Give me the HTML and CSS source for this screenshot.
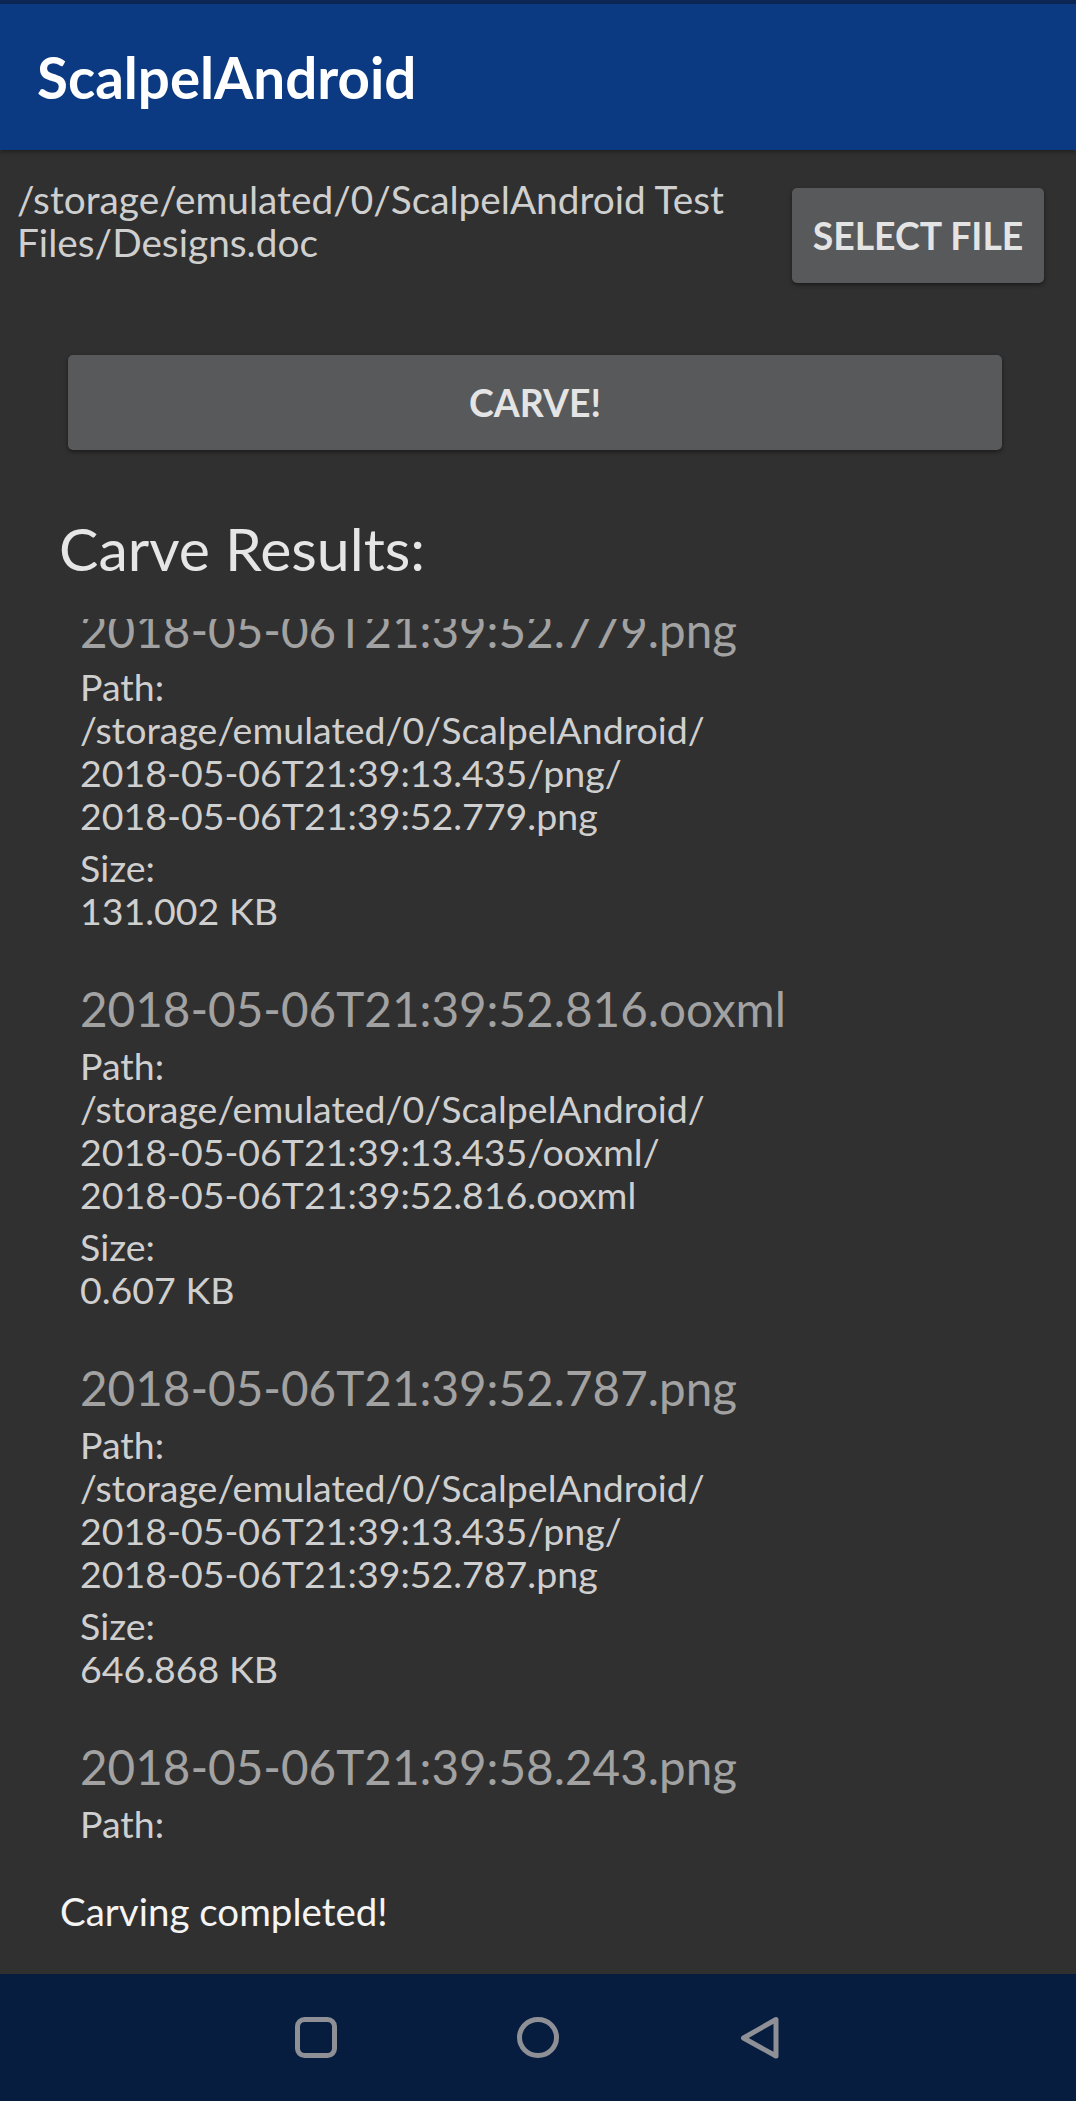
FILE: index.html
```html
<!DOCTYPE html>
<html lang="en">
<head>
<meta charset="utf-8">
<title>ScalpelAndroid</title>
<link rel="stylesheet" href="styles.css">
</head>
<body>
<div class="screen">
  <div class="statusbar"></div>
  <header class="appbar"><h1 class="title">ScalpelAndroid</h1></header>
  <main class="content">
    <div class="file-row">
      <p class="file-path">/storage/emulated/0/ScalpelAndroid Test Files/Designs.doc</p>
      <button class="btn btn-select">SELECT FILE</button>
    </div>
    <button class="btn btn-carve">CARVE!</button>
    <h2 class="results-title">Carve Results:</h2>
    <div class="results-viewport">
      <div class="results-list">
        <div class="item">
          <div class="item-name">2018-05-06T21:39:52.779.png</div>
          <div class="item-label">Path:</div>
          <div class="item-value">/storage/emulated/0/ScalpelAndroid/<br>2018-05-06T21:39:13.435/png/<br>2018-05-06T21:39:52.779.png</div>
          <div class="item-label item-size">Size:</div>
          <div class="item-value">131.002 KB</div>
        </div>
        <div class="item">
          <div class="item-name">2018-05-06T21:39:52.816.ooxml</div>
          <div class="item-label">Path:</div>
          <div class="item-value">/storage/emulated/0/ScalpelAndroid/<br>2018-05-06T21:39:13.435/ooxml/<br>2018-05-06T21:39:52.816.ooxml</div>
          <div class="item-label item-size">Size:</div>
          <div class="item-value">0.607 KB</div>
        </div>
        <div class="item">
          <div class="item-name">2018-05-06T21:39:52.787.png</div>
          <div class="item-label">Path:</div>
          <div class="item-value">/storage/emulated/0/ScalpelAndroid/<br>2018-05-06T21:39:13.435/png/<br>2018-05-06T21:39:52.787.png</div>
          <div class="item-label item-size">Size:</div>
          <div class="item-value">646.868 KB</div>
        </div>
        <div class="item">
          <div class="item-name">2018-05-06T21:39:58.243.png</div>
          <div class="item-label">Path:</div>
        </div>
      </div>
    </div>
    <p class="status">Carving completed!</p>
  </main>
  <nav class="navbar">
    <svg class="nav-icon" width="46" height="46" viewBox="0 0 46 46" aria-label="Recents">
      <rect x="4.5" y="4.5" width="37" height="36" rx="7" fill="none" stroke="#8e9095" stroke-width="5"/>
    </svg>
    <svg class="nav-icon" width="46" height="46" viewBox="0 0 46 46" aria-label="Home">
      <ellipse cx="23" cy="22.5" rx="18.5" ry="18" fill="none" stroke="#8e9095" stroke-width="5"/>
    </svg>
    <svg class="nav-icon" width="46" height="46" viewBox="0 0 46 46" aria-label="Back">
      <path d="M39 4.5 L39 41 L6.5 23 Z" fill="none" stroke="#8e9095" stroke-width="5" stroke-linejoin="round"/>
    </svg>
  </nav>
</div>
</body>
</html>
```

FILE: styles.css
```css
* { box-sizing: border-box; }
html, body { margin: 0; padding: 0; }
body {
  background: #303030;
  font-family: Lato, "Open Sans", sans-serif;
}
.screen {
  width: 1076px;
  height: 2101px;
  display: flex;
  flex-direction: column;
  background: #303030;
  overflow: hidden;
}
.statusbar {
  height: 4px;
  background: #0c2656;
  flex: none;
}
.appbar {
  height: 146px;
  flex: none;
  background: #0b3a82;
  display: flex;
  align-items: center;
  padding-left: 37px;
  box-shadow: 0 2px 4px rgba(0,0,0,0.35);
}
.title {
  margin: 0;
  color: #ffffff;
  font-weight: 700;
  font-size: 56.5px;
  line-height: 64px;
  letter-spacing: 0;
}
.content {
  flex: 1;
  display: flex;
  flex-direction: column;
  min-height: 0;
}
.file-row {
  display: flex;
  align-items: flex-start;
  justify-content: space-between;
  padding: 28px 32px 0 17px;
}
.file-path {
  margin: 0;
  width: 740px;
  color: #cfcfcf;
  font-size: 38.8px;
  line-height: 43px;
}
.btn {
  border: none;
  background: #58595b;
  color: #e4e4e4;
  font-family: Lato, "Open Sans", sans-serif;
  font-weight: 700;
  font-size: 37.4px;
  border-radius: 5px;
  box-shadow: 0 2px 4px rgba(0,0,0,0.45);
  padding: 0;
}
.btn-select {
  margin-top: 9.5px;
  width: 252px;
  height: 95px;
  flex: none;
}
.btn-carve {
  margin: 72px 74px 0 68px;
  height: 95px;
}
.results-title {
  margin: 63px 0 0 59px;
  color: #e6e6e6;
  font-weight: 400;
  font-size: 59px;
  line-height: 72px;
}
.results-viewport {
  margin-top: 34px;
  height: 1231px;
  overflow: hidden;
  flex: none;
}
.results-list {
  margin-top: -24.5px;
  padding-left: 80px;
}
.item + .item {
  margin-top: 41px;
}
.item-name {
  color: #a2a2a2;
  font-size: 47.6px;
  line-height: 71px;
  white-space: nowrap;
}
.item-label, .item-value {
  color: #cfcfcf;
  font-size: 37.5px;
  line-height: 43px;
  white-space: nowrap;
}
.item-size {
  margin-top: 9px;
}
.status {
  margin: 40.5px 0 0 60px;
  color: #f4f4f4;
  font-size: 38.5px;
  line-height: 43px;
}
.navbar {
  height: 127px;
  flex: none;
  background: #061d40;
  display: flex;
  align-items: center;
  justify-content: center;
  gap: 176px;
  padding-left: 0;
}
.nav-icon {
  display: block;
}
```
